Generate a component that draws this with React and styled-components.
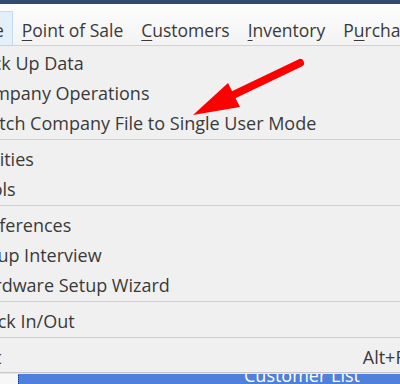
import React from 'react';
import styled, { createGlobalStyle } from 'styled-components';

const font = '"Open Sans", "Noto Sans", "DejaVu Sans", sans-serif';
const textColor = '#3a3a3a';

const GlobalStyle = createGlobalStyle`
  html, body {
    margin: 0;
    padding: 0;
    background: #f0f0f0;
  }
`;

const Viewport = styled.div`
  position: relative;
  width: 400px;
  height: 384px;
  overflow: hidden;
  font-family: ${font};
  color: ${textColor};
  background: #f0f0f0;
`;

const Frame = styled.div`
  display: flex;
  flex-direction: column;
  width: 480px;
  margin-left: -33px;
`;

const TitleStrip = styled.div`
  height: 4px;
  background: #2f4b6e;
`;

const MenuBar = styled.div`
  display: flex;
  align-items: flex-end;
  height: 41px;
  background: linear-gradient(#fdfdfd, #f3f3f3);
  border-bottom: 1px solid #d2d2d2;
`;

const MenuTab = styled.div`
  display: flex;
  align-items: center;
  box-sizing: border-box;
  height: 34px;
  padding: 3px 8px 0;
  font-size: 17.5px;
  white-space: nowrap;
  background: ${(p) => (p.$open ? '#e3effa' : 'transparent')};
  border: 1px solid ${(p) => (p.$open ? '#c3dcf2' : 'transparent')};
  border-bottom: none;

  u {
    text-decoration: underline;
    text-underline-offset: 3px;
    text-decoration-thickness: 1px;
  }
`;

const Dropdown = styled.div`
  position: relative;
  z-index: 2;
  display: flex;
  flex-direction: column;
  padding-top: 2px;
  background: #f0f0f0;
  border-bottom: 1px solid #c8c8c8;
  box-shadow: 0 1px 0 #e6e6e6;
`;

const Item = styled.div`
  display: flex;
  align-items: center;
  height: 30px;
  padding: 0 32px 0 4px;
  font-size: 18px;
  white-space: nowrap;
`;

const Shortcut = styled.span`
  margin-left: auto;
`;

const Separator = styled.div`
  height: 1px;
  margin: 1px 0 4px;
  background: #cfcfcf;
`;

const ListRow = styled.div`
  display: flex;
  height: 30px;
  margin-top: -13px;
`;

const RowGutter = styled.div`
  width: 51px;
  background: #f7f7f7;
`;

const SelectedCell = styled.div`
  flex: 1;
  display: flex;
  align-items: center;
  padding-left: 225px;
  background: #4f80dc;
  border-left: 1px dotted #1c2a44;
  color: #ffffff;
  font-size: 18px;
  white-space: nowrap;
`;

const ArrowLayer = styled.svg`
  position: absolute;
  top: 0;
  left: 0;
  width: 400px;
  height: 384px;
  pointer-events: none;
  z-index: 5;
`;

const tabs = [
  { label: 'File', open: true },
  { label: 'Point of Sale' },
  { label: 'Customers' },
  { label: 'Inventory' },
  { label: 'Purchases', at: 1 },
];

const groups = [
  ['Back Up Data', 'Company Operations', 'Switch Company File to Single User Mode'],
  ['Utilities', 'Tools'],
  ['Preferences', 'Setup Interview', 'Hardware Setup Wizard'],
  ['Clock In/Out'],
  [{ label: 'Exit', shortcut: 'Alt+F4' }],
];

// underline the access key letter, like a Windows menu
const TabLabel = ({ label, at = 0 }) => (
  <>
    {label.slice(0, at)}
    <u>{label[at]}</u>
    {label.slice(at + 1)}
  </>
);

export default function App() {
  return (
    <>
      <GlobalStyle />
      <Viewport>
        <Frame>
          <TitleStrip />
          <MenuBar>
            {tabs.map((t) => (
              <MenuTab key={t.label} $open={t.open}>
                <TabLabel label={t.label} at={t.at} />
              </MenuTab>
            ))}
          </MenuBar>
          <Dropdown>
            {groups.map((group, gi) => (
              <React.Fragment key={gi}>
                {gi > 0 && <Separator />}
                {group.map((entry) => {
                  const item = typeof entry === 'string' ? { label: entry } : entry;
                  return (
                    <Item key={item.label}>
                      {item.label}
                      {item.shortcut && <Shortcut>{item.shortcut}</Shortcut>}
                    </Item>
                  );
                })}
              </React.Fragment>
            ))}
          </Dropdown>
          <ListRow>
            <RowGutter />
            <SelectedCell>Customer List</SelectedCell>
          </ListRow>
        </Frame>
        <ArrowLayer viewBox="0 0 400 384">
          <line x1="300" y1="63" x2="231" y2="96" stroke="#ff0000" strokeWidth="8" strokeLinecap="round" />
          <polygon points="193,115 240,107 228,83" fill="#ff0000" />
        </ArrowLayer>
      </Viewport>
    </>
  );
}
